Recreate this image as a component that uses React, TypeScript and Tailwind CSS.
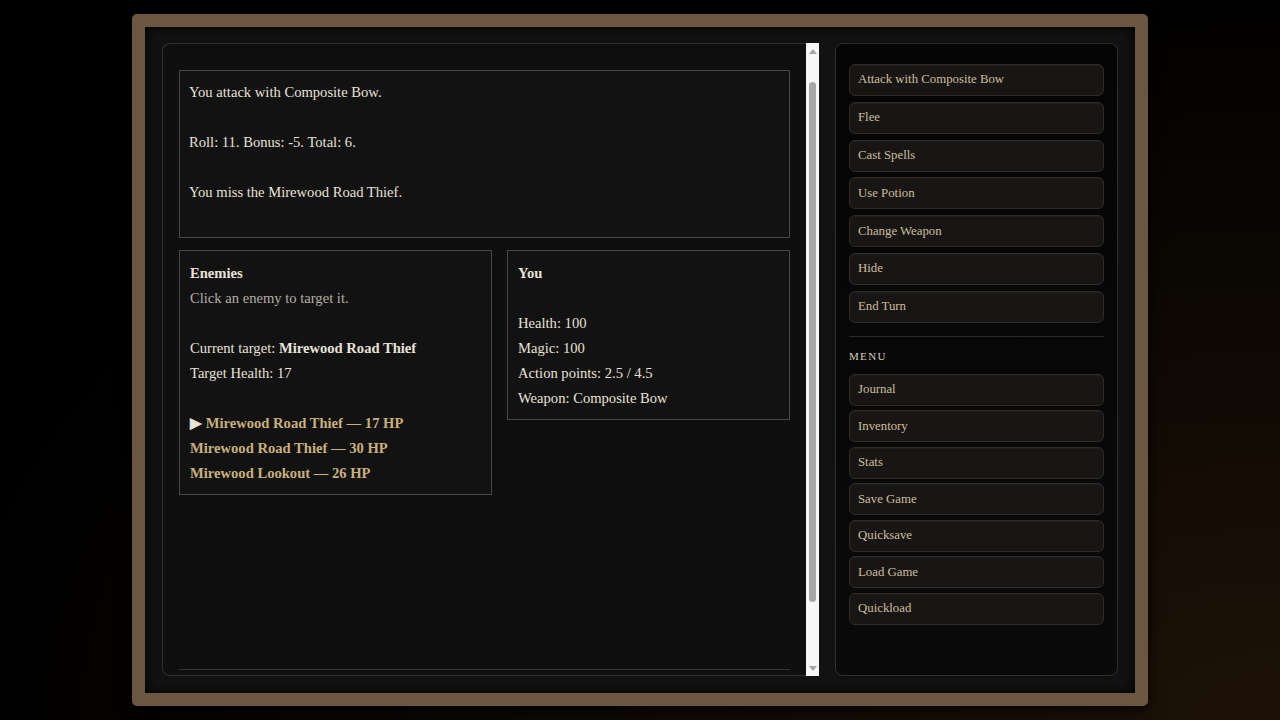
import React from 'react';

const actions = ['Attack with Composite Bow', 'Flee', 'Cast Spells', 'Use Potion', 'Change Weapon', 'Hide', 'End Turn'];
const menu = ['Journal', 'Inventory', 'Stats', 'Save Game', 'Quicksave', 'Load Game', 'Quickload'];

const btn =
  'flex items-center h-[32px] px-[8px] rounded-md border border-[#2f2c28] bg-[#181614] text-[12.8px] text-[#cdbd9c] shadow-[inset_0_1px_0_rgba(255,255,255,0.03)]';

const Scrollbar: React.FC = () => (
  <div className="w-[13px] shrink-0 bg-[#f7f7f7] flex flex-col items-center">
    <div className="h-[12px] flex items-center justify-center">
      <div className="w-0 h-0 border-l-[4px] border-r-[4px] border-b-[5px] border-l-transparent border-r-transparent border-b-[#a3a3a3] mt-[4px]" />
    </div>
    <div className="h-[27px]" />
    <div className="w-[7px] h-[520px] rounded-full bg-[#a6a6a6]" />
    <div className="flex-1" />
    <div className="h-[14px] flex items-center justify-center">
      <div className="w-0 h-0 border-l-[4px] border-r-[4px] border-t-[5px] border-l-transparent border-r-transparent border-t-[#a3a3a3] mb-[2px]" />
    </div>
  </div>
);

export default function App() {
  return (
    <div className="w-full h-[720px] flex items-center justify-center bg-[radial-gradient(ellipse_at_100%_100%,#1e1207_0%,#0b0703_45%,#000_75%)] font-['Liberation_Serif',serif]">
      <div className="w-[1016px] h-[692px] border-[13px] border-[#6b5641] rounded-[5px] bg-[#121212] shadow-[0_4px_14px_rgba(0,0,0,0.8)]">
        <div className="h-full flex gap-4 pl-[17px] pr-[17px] pt-[16px] pb-[17px] shadow-[inset_0_0_14px_rgba(0,0,0,0.85)]">
          {/* main log panel */}
          <div className="flex-1 flex">
            <div className="flex-1 flex flex-col rounded-l-lg border border-r-0 border-[#2f2f2f] bg-[#0f0f0f] pt-[26px] px-4 pb-[5px] text-[14.6px] leading-[25px] text-[#e8e2d6]">
              <div className="border border-[#474747] bg-[#121212] px-[9px] pt-[9px] pb-[7px]">
                <div>You attack with Composite Bow.</div>
                <div>&nbsp;</div>
                <div>Roll: 11. Bonus: -5. Total: 6.</div>
                <div>&nbsp;</div>
                <div>You miss the Mirewood Road Thief.</div>
                <div>&nbsp;</div>
              </div>

              <div className="flex items-start gap-[15px] mt-[12px]">
                <div className="w-[313px] border border-[#474747] bg-[#121212] px-[10px] pt-[10px] pb-[8px]">
                  <div className="font-bold">Enemies</div>
                  <div className="text-[#b3ada3]">Click an enemy to target it.</div>
                  <div>&nbsp;</div>
                  <div>
                    Current target: <span className="font-bold">Mirewood Road Thief</span>
                  </div>
                  <div>Target Health: 17</div>
                  <div>&nbsp;</div>
                  <div className="font-bold text-[#c9b07c]">
                    <span className="text-[#e8e2d6]">▶</span> Mirewood Road Thief — 17 HP
                  </div>
                  <div className="font-bold text-[#c9b07c]">Mirewood Road Thief — 30 HP</div>
                  <div className="font-bold text-[#c9b07c]">Mirewood Lookout — 26 HP</div>
                </div>
                <div className="flex-1 border border-[#474747] bg-[#121212] px-[10px] pt-[10px] pb-[8px]">
                  <div className="font-bold">You</div>
                  <div>&nbsp;</div>
                  <div>Health: 100</div>
                  <div>Magic: 100</div>
                  <div>Action points: 2.5 / 4.5</div>
                  <div>Weapon: Composite Bow</div>
                </div>
              </div>

              <div className="flex-1" />
              <div className="border-t border-[#333]" />
            </div>
            <Scrollbar />
          </div>

          {/* sidebar */}
          <div className="w-[283px] shrink-0 rounded-lg border border-[#2e2e2e] bg-[linear-gradient(#050505,#0a0a0a)] pt-[20px] px-[13px]">
            <div className="flex flex-col gap-[5.8px]">
              {actions.map((a) => (
                <div key={a} className={btn}>
                  {a}
                </div>
              ))}
            </div>
            <div className="border-t border-[#2a2a2a] mt-[13px]" />
            <div className="mt-[11px] text-[11px] leading-[16px] tracking-[0.12em] uppercase text-[#d9cfbd]">Menu</div>
            <div className="mt-[10px] flex flex-col gap-[4.5px]">
              {menu.map((m) => (
                <div key={m} className={btn}>
                  {m}
                </div>
              ))}
            </div>
          </div>
        </div>
      </div>
    </div>
  );
}
